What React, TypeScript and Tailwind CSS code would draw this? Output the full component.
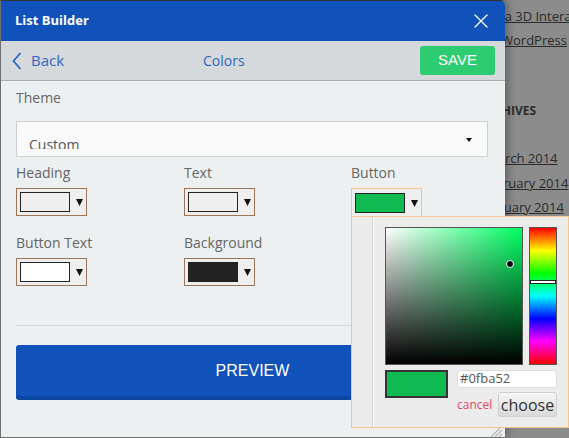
import { X } from 'lucide-react'

const sans  = 'font-["Open_Sans","Liberation_Sans",sans-serif]'
const arial = 'font-["Liberation_Sans",Arial,sans-serif]'

function Caret() {
  return (
    <svg width="7" height="8" viewBox="0 0 7 8" aria-hidden>
      <polygon points="0,1 7,1 3.5,8" fill="#111" />
    </svg>
  )
}

function Swatch({ color, active = false }: { color: string; active?: boolean }) {
  return (
    <div
      className={`flex h-[28px] w-[71px] items-center gap-[6px] border bg-[#efefef] pl-[3px] ${
        active ? 'border-[#f5c58c] border-b-0' : 'border-[#9c7657]'
      }`}
    >
      <div className="h-[20px] w-[50px] border border-[#222]" style={{ background: color }} />
      <Caret />
    </div>
  )
}

function Field({ label, color, active }: { label: string; color: string; active?: boolean }) {
  return (
    <div className="flex flex-col">
      <span className="h-[20px] text-[14px] leading-[20px] text-[#666]">{label}</span>
      <div className="mt-[5px]">
        <Swatch color={color} active={active} />
      </div>
    </div>
  )
}

function Picker() {
  return (
    <div className={`absolute left-[351px] top-[216px] flex h-[212px] w-[218px] border border-[#f5c58c] bg-[#ececec] ${sans}`}>
      {/* gutter */}
      <div className="w-[21px] border-r border-[#d2d2d2]" />
      <div className="w-px bg-white" />

      <div className="flex flex-1 flex-col pl-[11px] pt-[10px]">
        <div className="flex gap-[6px]">
          {/* saturation / value square */}
          <div className="relative h-[138px] w-[138px] border border-[#555] bg-[#00ff62]">
            <div className="absolute inset-0 bg-linear-to-r from-white to-transparent" />
            <div className="absolute inset-0 bg-linear-to-b from-transparent to-black" />
            <div className="absolute left-[120px] top-[32px] h-[8px] w-[8px] rounded-full border border-white bg-black" />
          </div>
          {/* hue */}
          <div className="relative h-[138px] w-[28px] border border-[#555] bg-[linear-gradient(to_bottom,#f00,#ff0,#0f0,#0ff,#00f,#f0f,#f00)]">
            <div className="absolute left-0 right-0 top-[52px] h-[4px] border border-[#222] bg-white" />
          </div>
        </div>

        <div className="mt-[5px] flex">
          <div className="h-[28px] w-[63px] border-2 border-[#333] bg-[#0fba52]" />
          <div className="ml-[9px] flex flex-col">
            <div className="flex h-[18px] w-[100px] items-center rounded-[3px] border border-[#ddd] bg-white px-[2px] text-[13px] text-[#555]">
              #0fba52
            </div>
            <div className="mt-[4px] flex items-center">
              <span className="w-[41px] text-[12px] text-[#e2465e]">cancel</span>
              <button className="h-[25px] w-[59px] rounded-[3px] border border-[#cfcfcf] bg-linear-to-b from-[#f7f7f7] to-[#d9d9d9] text-[16px] leading-none text-[#333]">
                choose
              </button>
            </div>
          </div>
        </div>
      </div>
    </div>
  )
}

export default function App() {
  return (
    <div className={`relative h-[438px] w-[569px] overflow-hidden bg-[#8c8c8c] ${sans}`}>
      {/* ── Page behind the overlay ─────────────────────────────── */}
      <div className="flex flex-col pt-[6px] text-[13px] leading-[20px] text-[#2b2b2b] whitespace-nowrap">
        <span className="ml-[490px] underline">in a 3D Interactive</span>
        <span className="ml-[501px] mt-[4px] underline">WordPress</span>
        <span className="ml-[478px] mt-[51px] text-[12px] font-bold">ARCHIVES</span>
        <span className="ml-[486px] mt-[27px] underline">March 2014</span>
        <span className="ml-[481px] mt-[5px] underline">February 2014</span>
        <span className="ml-[485px] mt-[4px] underline">January 2014</span>
      </div>

      {/* ── Modal ──────────────────────────────────────────────── */}
      <div className="absolute left-0 top-0 flex h-[438px] w-[505px] flex-col border-l border-b border-t border-[#6e6e6e] border-t-[#333] bg-[#ecf0f1] shadow-[3px_0_8px_rgba(0,0,0,0.3)] rounded-tr-[4px]">
        <div className="flex h-[40px] items-center justify-between bg-[#1052b9] pl-[14px] pr-[12px] rounded-tr-[4px]">
          <span className="text-[13px] font-bold text-white">List Builder</span>
          <X className="h-[24px] w-[24px] text-white" strokeWidth={1.3} aria-hidden />
        </div>

        <div className="flex h-[40px] items-center border-b border-[#a9acae] bg-[#d5d9db] pr-[10px]">
          <div className="flex w-[202px] items-center">
            <svg className="ml-[11px]" width="10" height="18" viewBox="0 0 10 18" aria-hidden>
              <path d="M8.5 1 L1.5 9 L8.5 17" fill="none" stroke="#2f68c4" strokeWidth="1.8" />
            </svg>
            <span className="ml-[9px] text-[15px] text-[#2f68c4]">Back</span>
          </div>
          <span className="text-[14px] text-[#2f68c4]">Colors</span>
          <div className="flex-1" />
          <button className={`h-[29px] w-[75px] rounded-[3px] bg-[#2ecc71] text-[15px] text-white ${arial}`}>SAVE</button>
        </div>

        <div className="flex flex-col px-[15px]">
          <span className="mt-[7px] h-[20px] text-[14px] leading-[20px] text-[#666]">Theme</span>
          <div className="relative mt-[13px] h-[36px] w-[472px] border border-[#cdcfd0] bg-[#fafafa]">
            <div className="ml-[12px] mt-[13px] h-[14px] overflow-hidden text-[14px] leading-[20px] text-[#555]">
              Custom
            </div>
            <svg className="absolute right-[15px] top-[16px]" width="6" height="4" viewBox="0 0 6 4" aria-hidden>
              <polygon points="0,0 6,0 3,4" fill="#111" />
            </svg>
          </div>

          <div className="mt-[6px] grid grid-cols-[168px_167px_1fr] gap-y-[17px]">
            <Field label="Heading" color="#efefef" />
            <Field label="Text" color="#efefef" />
            <Field label="Button" color="#0fba52" active />
            <Field label="Button Text" color="#ffffff" />
            <Field label="Background" color="#222222" />
          </div>

          <div className="mt-[39px] h-px bg-[#d6dadb]" />

          <button className={`mt-[19px] h-[55px] w-[472px] rounded-[3px] border-b-[4px] border-[#0c47a3] bg-[#1052b9] pl-[1px] text-[16px] text-white ${arial}`}>
            PREVIEW
          </button>
        </div>

        <div className="flex-1" />
        <svg className="absolute bottom-0 right-[2px]" width="14" height="10" viewBox="0 0 14 10" aria-hidden>
          <path d="M2 10 L11 1 M6 10 L13 3 M10 10 L13 7" stroke="#b5b5b5" strokeWidth="1.2" />
        </svg>
      </div>

      <Picker />
    </div>
  )
}
